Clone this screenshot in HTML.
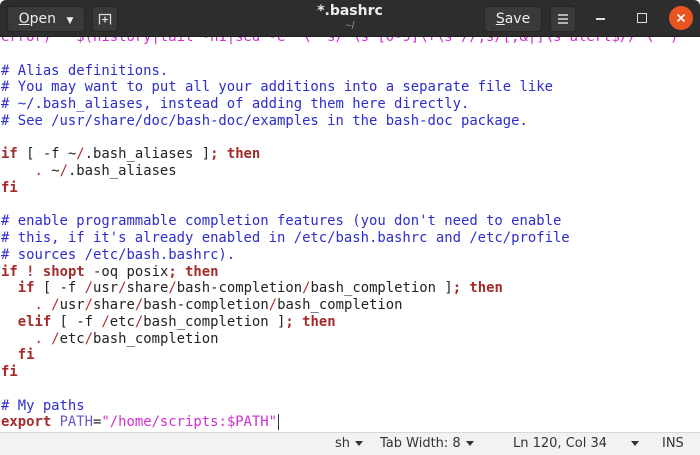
<!DOCTYPE html>
<html><head><meta charset="utf-8"><style>
*{margin:0;padding:0;box-sizing:border-box}
body{width:700px;height:455px;overflow:hidden;background:#fff;position:relative;font-family:"Liberation Sans","DejaVu Sans",sans-serif}
#hdr{position:absolute;left:0;top:0;width:700px;height:37px;background:#2d2d2d;border-bottom:1px solid #1e1e1e;z-index:2;border-radius:6px 6px 0 0}
.btn{position:absolute;top:6px;height:26px;background:#3a3a3a;border:1px solid #262626;border-radius:4px;color:#eee;font-size:14px;line-height:24px;text-align:center;font-family:"DejaVu Sans",sans-serif}
#code{position:absolute;left:1px;top:29px;font-family:"DejaVu Sans Mono",monospace;font-size:13.9px;line-height:16.75px;white-space:pre;color:#222}
.c{color:#2d2dcc}.k{color:#a52a2a;font-weight:bold}.s{color:#d030d0}.p{color:#b03030}.v{color:#6a5acd}
#sb{position:absolute;left:0;top:432px;width:700px;height:23px;background:#f2f2f2;border-top:1px solid #d8d8d8;font-size:13px;color:#333;font-family:"DejaVu Sans",sans-serif}
#sb span{position:absolute;top:3px}
.tri{display:inline-block;width:0;height:0;border-left:4px solid transparent;border-right:4px solid transparent;border-top:5px solid #333;vertical-align:middle;margin-left:5px}
</style></head><body>
<div id="code"><span class="s">error)" "$(history|tail -n1|sed -e '\''s/^\s*[0-9]\+\s*//;s/[;&amp;|]\s*alert$//'\'')"'</span>

<span class="c"># Alias definitions.</span>
<span class="c"># You may want to put all your additions into a separate file like</span>
<span class="c"># ~/.bash_aliases, instead of adding them here directly.</span>
<span class="c"># See /usr/share/doc/bash-doc/examples in the bash-doc package.</span>

<span class="k">if</span> [ -f ~<span class="p">/</span>.bash_aliases ]<span class="k">; then</span>
    <span class="p">.</span> ~<span class="p">/</span>.bash_aliases
<span class="k">fi</span>

<span class="c"># enable programmable completion features (you don't need to enable</span>
<span class="c"># this, if it's already enabled in /etc/bash.bashrc and /etc/profile</span>
<span class="c"># sources /etc/bash.bashrc).</span>
<span class="k">if</span> <span class="k">!</span> <span class="k">shopt</span> -oq posix<span class="k">; then</span>
  <span class="k">if</span> [ -f <span class="p">/</span>usr<span class="p">/</span>share<span class="p">/</span>bash-completion<span class="p">/</span>bash_completion ]<span class="k">; then</span>
    <span class="p">.</span> <span class="p">/</span>usr<span class="p">/</span>share<span class="p">/</span>bash-completion<span class="p">/</span>bash_completion
  <span class="k">elif</span> [ -f <span class="p">/</span>etc<span class="p">/</span>bash_completion ]<span class="k">; then</span>
    <span class="p">.</span> <span class="p">/</span>etc<span class="p">/</span>bash_completion
  <span class="k">fi</span>
<span class="k">fi</span>

<span class="c"># My paths</span>
<span class="k">export</span> <span class="v">PATH</span>=<span class="s">"/home/scripts:$PATH"</span><span style="border-left:1px solid #333;margin-left:1px"></span></div>
<div id="hdr">
 <div class="btn" style="left:7px;width:78px"><u>O</u>pen <span style="font-size:9px;margin-left:6px">▼</span></div>
 <div class="btn" style="left:92px;width:26px"><svg width="14" height="14" viewBox="0 0 14 14" style="margin-top:5px"><path d="M1.5 12.5V2.5h11v10M4 7.5h6M7 4.5v6" stroke="#ddd" stroke-width="1.3" fill="none"/></svg></div>
 <div style="position:absolute;left:0;width:700px;top:3px;text-align:center;color:#eee;font-weight:bold;font-size:14px;font-family:'DejaVu Sans',sans-serif">*.bashrc</div>
 <div style="position:absolute;left:0;width:700px;top:20px;text-align:center;color:#999;font-size:11px">~/</div>
 <div class="btn" style="left:484px;width:58px"><u>S</u>ave</div>
 <div class="btn" style="left:550px;width:26px"><svg width="12" height="12" viewBox="0 0 12 12" style="margin-top:6px"><path d="M1 2h10M1 6h10M1 10h10" stroke="#ddd" stroke-width="1.4"/></svg></div>
 <div style="position:absolute;left:596px;top:18px;width:9px;height:2px;background:#ddd"></div>
 <div style="position:absolute;left:637px;top:13px;width:10px;height:10px;border:1.5px solid #ddd"></div>
 <div style="position:absolute;left:669px;top:6px;width:24px;height:24px;border-radius:50%;background:#e95420"><svg width="24" height="24" viewBox="0 0 24 24"><path d="M8.5 8.5l7 7M15.5 8.5l-7 7" stroke="#fff" stroke-width="1.6"/></svg></div>
</div>
<div id="sb">
 <span style="left:335px">sh<i class="tri"></i></span>
 <span style="left:380px">Tab Width: 8<i class="tri"></i></span>
 <span style="left:513px">Ln 120, Col 34</span>
 <span style="left:626px"><i class="tri"></i></span>
 <span style="left:662px">INS</span>
</div>
</body></html>
